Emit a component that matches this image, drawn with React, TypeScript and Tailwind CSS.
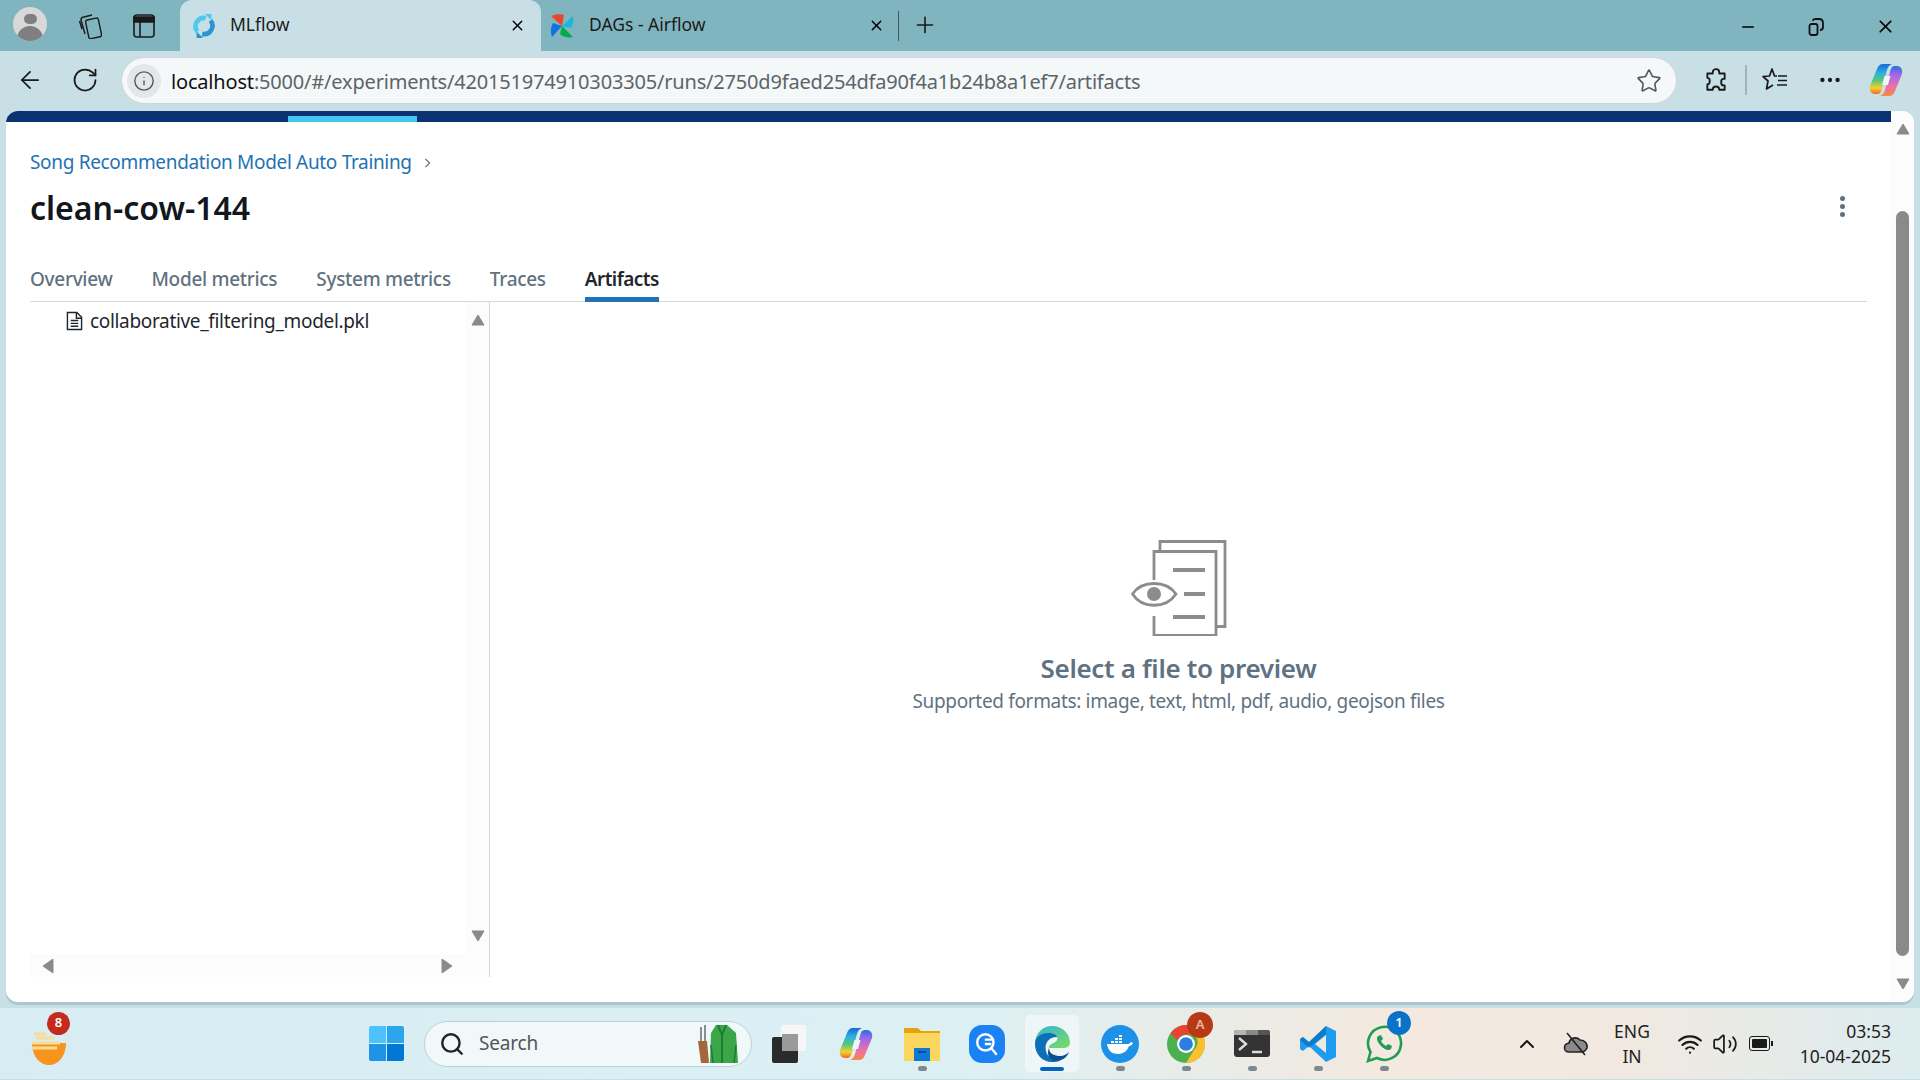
import { ArrowLeft, ChevronUp, Info, Minus, MoreHorizontal, Plus, RotateCw, Search, Star, Volume2, Wifi, X } from "lucide-react"

const font = "font-['Noto_Sans','Open_Sans',sans-serif]"

function Triangle({ dir, className }: { dir: "up" | "down" | "left" | "right"; className?: string }) {
  const points = {
    up: "7,1 13,11 1,11",
    down: "1,1 13,1 7,11",
    left: "11,0 11,14 1,7",
    right: "1,0 1,14 11,7",
  }[dir]
  return (
    <svg viewBox="0 0 14 14" className={className}>
      <polygon points={points} fill="#8a8a8a" stroke="#8a8a8a" strokeWidth="1" strokeLinejoin="round" />
    </svg>
  )
}

function CopilotLogo({ id, className }: { id: string; className?: string }) {
  return (
    <svg viewBox="0 0 36 36" className={className}>
      <defs>
        <linearGradient id={`${id}A`} x1="0" y1="0" x2="0" y2="1">
          <stop offset="0" stopColor="#1668d8" />
          <stop offset="0.3" stopColor="#30b0e0" />
          <stop offset="0.55" stopColor="#56c878" />
          <stop offset="0.8" stopColor="#f6d22b" />
          <stop offset="1" stopColor="#f0662c" />
        </linearGradient>
        <linearGradient id={`${id}B`} x1="0" y1="0" x2="0" y2="1">
          <stop offset="0" stopColor="#2a70e0" />
          <stop offset="0.3" stopColor="#a468e8" />
          <stop offset="0.7" stopColor="#f070a8" />
          <stop offset="1" stopColor="#f58a3c" />
        </linearGradient>
      </defs>
      <path d="M15 2h9c-3 1-4 3-5 6l-5 18c-1 4-2 6-5 6H7C3 32 1 28 2 24L9 7c1-3 3-5 6-5Z" fill={`url(#${id}A)`} />
      <path d="M21 34h-9c3-1 4-3 5-6l5-18c1-4 2-6 5-6h2c4 0 6 4 5 8l-7 17c-1 3-3 5-6 5Z" fill={`url(#${id}B)`} />
      <path d="M16.500 14h6l-2.500 9h-6z" fill="#eef6f8" />
    </svg>
  )
}

function MlflowLogo({ className }: { className?: string }) {
  return (
    <svg viewBox="0 0 28 28" className={className} fill="none" strokeWidth="5">
      <path d="M16 5.500A9 9 0 0 0 7 20" stroke="#4fc8f0" />
      <path d="M12 22.500A9 9 0 0 0 21 8" stroke="#2a94d6" />
      <polygon points="15,1 22,1 22,8" fill="#4fc8f0" />
      <polygon points="13,27 6,27 6,20" fill="#2a94d6" />
    </svg>
  )
}

function AirflowLogo({ className }: { className?: string }) {
  return (
    <svg viewBox="0 0 24 24" className={className}>
      <path d="M12 12 1 2c5-2 10-2 13-1z" fill="#e8472c" />
      <path d="M12 12 23 2c1 4 0 9-2 12z" fill="#1bb8d8" />
      <path d="M12 12 23 23c-5 1-10 0-13-3z" fill="#00ad46" />
      <path d="M12 12 2 23C0 18 1 12 3 9z" fill="#1273e0" />
    </svg>
  )
}

function PreviewIcon() {
  return (
    <svg viewBox="0 0 96 96" className="h-[96px] w-[96px]" fill="none" stroke="#8c8c8c" strokeWidth="2.8">
      <path d="M29 10V1.500h65v85H85" />
      <path d="M23 40V11.500h62v84H23V76" />
      <path d="M42 30h32M53 54h21M42 77h32" strokeWidth="4" />
      <path d="M1.500 54C11 40 35 40 45 54 35 69 11 69 1.500 54Z" />
      <circle cx="23" cy="54" r="7" fill="#8c8c8c" stroke="none" />
    </svg>
  )
}

function FileIcon() {
  return (
    <svg viewBox="0 0 18 20" className="mr-[7px] mt-[3px] h-[20px] w-[17px]" fill="none" stroke="#1f272d" strokeWidth="1.5">
      <path d="M1.500 1h10l5 5v13h-15zM11 1v6h5.500" />
      <path d="M5 9.500h8M5 12.500h8M5 15.500h8" />
    </svg>
  )
}

function TabStrip() {
  return (
    <div className="flex h-[51px] items-end bg-[#80b5bf]">
      <div className="ml-[13px] mb-[10px] flex h-[34px] w-[34px] flex-col items-center overflow-hidden rounded-full bg-[#d8d8d8]">
        <div className="mt-[7px] h-[13px] w-[13px] rounded-full bg-[#7f7f7f]" />
        <div className="mt-[2px] h-[18px] w-[26px] rounded-t-full bg-[#7f7f7f]" />
      </div>
      <svg viewBox="0 0 24 26" className="ml-[31px] mb-[12px] h-[26px] w-[24px]" fill="none" stroke="#1a1a1a" strokeWidth="1.4">
        <rect x="9" y="6" width="13" height="19" rx="2" transform="rotate(-12 15 15)" />
        <path d="M7 21 3 7c0-2 1-3 3-3l8-2M4 16 1.500 8" />
      </svg>
      <svg viewBox="0 0 22 24" className="ml-[31px] mb-[13px] h-[24px] w-[22px]" fill="none" stroke="#1a1a1a" strokeWidth="1.6">
        <rect x="1" y="1" width="20" height="22" rx="3" />
        <path d="M1 3h20v5H1z" fill="#1a1a1a" />
        <path d="M7 8v15" />
      </svg>
      <div className="ml-[25px] flex h-[51px] w-[361px] items-center rounded-t-[12px] bg-[#c8e0e5] pl-[11px]">
        <MlflowLogo className="h-[26px] w-[26px]" />
        <span className={`ml-[13px] -mt-[2px] text-[17.5px] text-[#1a1a1a] ${font}`}>MLflow</span>
        <X className="ml-auto mr-[15px] h-[17px] w-[17px] text-black" strokeWidth={2} />
      </div>
      <div className="flex h-[51px] w-[358px] items-center pl-[9px]">
        <AirflowLogo className="h-[26px] w-[24px]" />
        <span className={`ml-[15px] -mt-[2px] text-[17.5px] text-[#1a1a1a] ${font}`}>DAGs - Airflow</span>
        <X className="ml-auto mr-[13px] h-[17px] w-[17px] text-black" strokeWidth={2} />
        <div className="h-[30px] w-px bg-[#3d5a60]" />
      </div>
      <Plus className="ml-[13px] mb-[13px] h-[26px] w-[26px] text-[#1a1a1a]" strokeWidth={1.5} />
      <div className="ml-auto mb-[14px] flex items-center">
        <Minus className="mr-[51px] h-[18px] w-[18px] text-black" strokeWidth={2} />
        <svg viewBox="0 0 16 18" className="mr-[51px] h-[18px] w-[16px]" fill="none" stroke="#111" strokeWidth="1.8">
          <rect x="1.500" y="6" width="8" height="11" rx="2" />
          <path d="M5 3c0-2 1-2 3-2h3c3 0 4 1 4 4v4c0 2-1 3-3 3" />
        </svg>
        <X className="mr-[24px] h-[21px] w-[21px] text-black" strokeWidth={2} />
      </div>
    </div>
  )
}

function Toolbar() {
  return (
    <div className="flex h-[60px] items-start bg-[#c8e0e5] pt-[6px]">
      <ArrowLeft className="ml-[16px] mt-[9px] h-[28px] w-[28px] text-[#1a1a1a]" strokeWidth={1.5} />
      <RotateCw className="ml-[27px] mt-[9px] h-[28px] w-[28px] text-[#1a1a1a]" strokeWidth={1.5} />
      <div className="ml-[22px] flex h-[47px] w-[1556px] items-center rounded-full border-[1.5px] border-[#cfd4d6] bg-[#f4f8f9] pl-[5px] pr-[14px]">
        <div className="flex h-[34px] w-[34px] items-center justify-center rounded-full bg-[#e3e7e9]">
          <Info className="h-[22px] w-[22px] text-[#555]" strokeWidth={1.5} />
        </div>
        <div className={`ml-[10px] mt-[2px] text-[20px] tracking-[-0.18px] text-[#5d6468] ${font}`}>
          <span className="text-[#111]">localhost</span>:5000/#/experiments/420151974910303305/runs/2750d9faed254dfa90f4a1b24b8a1ef7/artifacts
        </div>
        <Star className="ml-auto h-[26px] w-[26px] text-[#555]" strokeWidth={1.5} />
      </div>
      <svg viewBox="0 0 24 24" className="ml-[26px] mt-[10px] h-[26px] w-[26px]" fill="none" stroke="#1a1a1a" strokeWidth="1.7" strokeLinejoin="round">
        <path d="M9 5c0-4 6-4 6 0v1h5v5h-1c-3 0-3 6 0 6h1v4h-5c0-4-6-4-6 0H4v-5c3 0 3-6 0-6V6h5z" />
      </svg>
      <div className="ml-[16px] mt-[8px] h-[30px] w-[2px] bg-[#a3b3b7]" />
      <svg viewBox="0 0 26 26" className="ml-[15px] mt-[10px] h-[26px] w-[26px]" fill="none" stroke="#1a1a1a" strokeWidth="1.7" strokeLinejoin="round">
        <path d="M15 9h-2.500L10 2 7.500 9 1 9.500 6 14 4.500 22 11 18" />
        <path d="M16 9h9M16 13.500h9M15 18h10" />
      </svg>
      <MoreHorizontal className="ml-[29px] mt-[10px] h-[26px] w-[26px] text-[#1a1a1a]" strokeWidth={2} />
      <CopilotLogo id="cpTop" className="ml-[25px] mt-[5px] h-[36px] w-[36px]" />
    </div>
  )
}

const tabs = ["Overview", "Model metrics", "System metrics", "Traces", "Artifacts"]

function RunPage() {
  return (
    <div className={`mx-[6px] flex h-[891px] overflow-hidden rounded-[12px] bg-white tracking-[-0.33px] shadow-[0_3px_0_#a9c9cf] ${font}`}>
      <div className="flex min-w-0 flex-1 flex-col">
        <div className="h-[11px] bg-[#0b3373] pl-[282px] pt-[5px]">
          <div className="h-[6px] w-[129px] bg-[#45c6ee]" />
        </div>
        <div className="flex flex-1 flex-col pl-[24px] pr-[24px]">
          <div className="mt-[27px] flex h-[26px] items-center text-[19px] leading-[26px] text-[#2272b4]">
            Song Recommendation Model Auto Training
            <svg viewBox="0 0 8 12" className="ml-[12px] mt-[2px] h-[10px] w-[7px]" fill="none" stroke="#5f7281" strokeWidth="1.5">
              <path d="M1.500 1l5 5-5 5" />
            </svg>
          </div>
          <div className="mt-[11px] flex items-center justify-between">
            <h1 className="text-[32px] font-semibold leading-[44px] tracking-normal text-[#11171c]">clean-cow-144</h1>
            <div className="mr-[22px] -mt-[3px] flex flex-col gap-[3px]">
              <div className="h-[5px] w-[5px] rounded-full bg-[#5f7281]" />
              <div className="h-[5px] w-[5px] rounded-full bg-[#5f7281]" />
              <div className="h-[5px] w-[5px] rounded-full bg-[#5f7281]" />
            </div>
          </div>
          <div className="mt-[29px] flex h-[43px] gap-[39px] border-b-[1.5px] border-[#d1d9e1] text-[19px] font-medium tracking-[-0.3px]">
            {tabs.map((tab) => (
              <div
                key={tab}
                className={
                  tab === "Artifacts"
                    ? "h-[43px] border-b-[5px] border-[#2272b4] pt-[7px] font-semibold leading-[26px] tracking-[-0.55px] text-[#1f272d]"
                    : "pt-[7px] leading-[26px] text-[#5f7281]"
                }
              >
                {tab}
              </div>
            ))}
          </div>
          <div className="flex h-[675px]">
            <div className="flex w-[460px] flex-col border-r-[1.5px] border-[#d1d9e1]">
              <div className="flex min-h-0 flex-1">
                <div className="flex flex-1 items-start pl-[36px] pt-[6px] text-[19px] leading-[26px] text-[#1f272d]">
                  <FileIcon />
                  collaborative_filtering_model.pkl
                </div>
                <div className="flex w-[23px] flex-col items-center justify-between bg-[#fcfcfc] pb-[10px] pt-[12px]">
                  <Triangle dir="up" className="h-[14px] w-[14px]" />
                  <Triangle dir="down" className="h-[14px] w-[14px]" />
                </div>
              </div>
              <div className="flex h-[23px] items-center justify-between bg-[#fcfcfc] pl-[12px] pr-[34px]">
                <Triangle dir="left" className="h-[14px] w-[14px]" />
                <Triangle dir="right" className="h-[14px] w-[14px]" />
              </div>
            </div>
            <div className="flex flex-1 flex-col items-center pt-[238px]">
              <PreviewIcon />
              <div className="mt-[14px] text-[26px] font-semibold leading-[36px] text-[#5f7281]">Select a file to preview</div>
              <div className="mt-[2px] text-[19px] leading-[26px] text-[#5f7281]">Supported formats: image, text, html, pdf, audio, geojson files</div>
            </div>
          </div>
        </div>
      </div>
      <div className="flex w-[23px] flex-col items-center bg-[#fcfcfc] pb-[10px] pt-[12px]">
        <Triangle dir="up" className="h-[14px] w-[16px]" />
        <div className="mt-[74px] h-[746px] w-[13px] rounded-full bg-[#8a8a8a]" />
        <Triangle dir="down" className="mt-[22px] h-[14px] w-[16px]" />
      </div>
    </div>
  )
}

function Dot({ active }: { active?: boolean }) {
  return <div className={active ? "h-[4px] w-[24px] rounded-full bg-[#0067c0]" : "h-[5px] w-[9px] rounded-full bg-[#7c8a90]"} />
}

function TaskIcon({ children, dot, active }: { children: React.ReactNode; dot?: boolean; active?: boolean }) {
  return (
    <div className={`relative flex h-[57px] w-[54px] flex-col items-center justify-center rounded-[5px] ${active ? "bg-[#eef6f8] shadow-[5px_0_0_-1px_#e4eff1]" : ""}`}>
      <div className="flex h-[38px] w-[38px] items-center justify-center">{children}</div>
      <div className="absolute bottom-[1px] flex justify-center">{(dot || active) && <Dot active={active} />}</div>
    </div>
  )
}

function Badge({ children, color, className }: { children: React.ReactNode; color: string; className: string }) {
  return (
    <div className={`absolute flex items-center justify-center rounded-full text-[13px] font-semibold ${color} ${className}`}>{children}</div>
  )
}

function Taskbar() {
  return (
    <div className={`mt-[6px] flex h-[71px] items-center bg-[linear-gradient(90deg,#d7edf3_0%,#dcf0f4_50%,#f3e9df_72%,#f1e9e1_85%,#dcecef_100%)] ${font}`}>
      <div className="relative ml-[30px] h-[42px] w-[36px]">
        <svg viewBox="0 0 36 42" className="h-[42px] w-[36px]">
          <path d="M2 20h34c0 12-7 22-17 22S2 32 2 20Z" fill="#f7941d" />
          <path d="M4 11h12M6 15h18M2 20h28M1 25h26" stroke="#f8dc9a" strokeWidth="3" />
        </svg>
        <Badge color="bg-[#c42b1c] text-white" className="left-[17px] top-[-11px] h-[23px] w-[23px]">8</Badge>
      </div>
      <div className="ml-[303px] grid h-[35px] w-[35px] grid-cols-2 gap-[1.5px]">
        <div className="rounded-tl-[2px] bg-[#4cc2ff]" />
        <div className="rounded-tr-[2px] bg-[#2aa5ee]" />
        <div className="rounded-bl-[2px] bg-[#1f94e6]" />
        <div className="rounded-br-[2px] bg-[#0078d4]" />
      </div>
      <div className="ml-[20px] flex h-[46px] w-[328px] items-center rounded-full border-[1.5px] border-[#bcd2d8] bg-[#f0f8fa] pl-[14px] pr-[12px]">
        <Search className="h-[26px] w-[26px] text-[#222]" strokeWidth={2.2} />
        <span className="ml-[14px] text-[19px] tracking-[-0.2px] text-[#555]">Search</span>
        <svg viewBox="0 0 42 42" className="ml-auto h-[42px] w-[42px]">
          <path d="M1 18h9l2 22H4z" fill="#a4673b" />
          <path d="M4 4v14M8 2v16" stroke="#8a8f92" strokeWidth="2" />
          <path d="M19 2h11l9 8 2 30H13l1-30z" fill="#3aa648" />
          <path d="M21 2l4 10 4-10M25 12v28" stroke="#1e7b33" strokeWidth="2" fill="none" />
          <path d="M14 22l2 18M39 22l-2 18" stroke="#1e7b33" strokeWidth="1.5" />
        </svg>
      </div>
      <div className="relative ml-[19px] h-[38px] w-[36px]">
        <div className="absolute right-[1px] top-0 h-[26px] w-[25px] rounded-[2px] bg-[#f6f6f6]" />
        <div className="absolute bottom-0 left-[1px] h-[26px] w-[26px] rounded-[2px] bg-[#2a2a2a]" />
        <div className="absolute left-[11px] top-[9px] h-[17px] w-[16px] bg-[#9a9a9a]" />
      </div>
      <CopilotLogo id="cpBar" className="ml-[31px] h-[38px] w-[36px]" />
      <div className="relative ml-[21px] flex h-[57px] w-[54px] flex-col items-center justify-center">
        <svg viewBox="0 0 38 36" className="h-[36px] w-[38px]">
          <path d="M1 2h14l3 3h19v30H1z" fill="#e5a50a" />
          <path d="M1 7h36v28H1z" fill="#fbd760" />
          <path d="M11 22h16v13H11z" fill="#0f78d4" />
          <path d="M15 26h8" stroke="#0a4f8f" strokeWidth="2" />
        </svg>
        <div className="absolute bottom-[1px]"><Dot /></div>
      </div>
      <div className="ml-[11px] flex items-center">
        <TaskIcon>
          <div className="flex h-[38px] w-[36px] items-center justify-center rounded-[13px] bg-[#1a82f5]">
            <svg viewBox="0 0 24 24" className="h-[26px] w-[26px]" fill="none" stroke="#fff" strokeWidth="2.2">
              <circle cx="10.500" cy="10.500" r="7.500" />
              <path d="M16 16l5 6M10 8h8M10 12h6" />
            </svg>
          </div>
        </TaskIcon>
        <div className="ml-[11px]">
          <TaskIcon active>
            <svg viewBox="0 0 38 38" className="h-[38px] w-[38px]">
              <defs>
                <linearGradient id="edgeA" x1="0" y1="0" x2="1" y2="1">
                  <stop offset="0" stopColor="#2fb4d8" />
                  <stop offset="1" stopColor="#7fdc5f" />
                </linearGradient>
              </defs>
              <path d="M2 19C2 8 10 1 19 1c11 0 18 8 18 17 0 3-3 5-7 5H16c0-6 10-4 8-11C21 7 6 7 2 19Z" fill="url(#edgeA)" />
              <path d="M2 19c0-7 6-11 13-11 5 0 9 2 9 4-8 0-13 6-11 14 1 6 8 10 15 9-3 2-6 2-9 2C9 37 2 29 2 19Z" fill="#0c6fb8" />
              <path d="M16 23c0 6 6 8 11 8 4 0 7-2 9-4-3 8-11 10-16 8-5-2-6-7-4-12Z" fill="#0a4f8f" />
            </svg>
          </TaskIcon>
        </div>
        <div className="ml-[14px] flex items-center gap-[12px]">
          <TaskIcon dot>
            <div className="flex h-[38px] w-[38px] items-center justify-center rounded-full bg-[#1d91e8]">
              <svg viewBox="0 0 28 20" className="h-[20px] w-[28px]" fill="#fff">
                <path d="M1 10h22c1-2 3-2 4-1-1 2-2 3-4 3-2 6-7 8-11 8-7 0-10-4-11-10Z" />
                <path d="M5 7h3v2H5zM9 7h3v2H9zM13 7h3v2h-3zM9 4h3v2H9zM13 4h3v2h-3zM13 1h3v2h-3z" />
              </svg>
            </div>
          </TaskIcon>
          <TaskIcon dot>
            <svg viewBox="0 0 36 36" className="h-[38px] w-[38px]">
              <circle cx="18" cy="18" r="18" fill="#4caf50" />
              <path d="M18 0a18 18 0 0 1 15.600 9H18a9 9 0 0 0-8.300 5.500L3.400 8A18 18 0 0 1 18 0Z" fill="#ea4335" />
              <path d="M33.600 9A18 18 0 0 1 18 36l8-13a9 9 0 0 0-1-14Z" fill="#fbc02d" />
              <circle cx="18" cy="18" r="8.500" fill="#fff" />
              <circle cx="18" cy="18" r="6.500" fill="#2a7de1" />
            </svg>
            <Badge color="bg-[#b83a14] text-[#f0b8a0]" className="left-[28px] top-[-3px] h-[26px] w-[26px]">A</Badge>
          </TaskIcon>
          <TaskIcon dot>
            <div className="flex h-[27px] w-[36px] flex-col overflow-hidden rounded-[3px] bg-[#333]">
              <div className="flex h-[5px]">
                <div className="w-[12px] bg-[#b5b5b5]" />
                <div className="w-[12px] bg-[#8a8a8a]" />
                <div className="flex-1 bg-[#555]" />
              </div>
              <svg viewBox="0 0 36 22" className="h-[22px] w-[36px]" fill="none" stroke="#ddd" strokeWidth="2.4">
                <path d="M5 3l7 6-7 6M18 17h10" />
              </svg>
            </div>
          </TaskIcon>
          <TaskIcon dot>
            <svg viewBox="0 0 36 38" className="h-[38px] w-[36px]">
              <path d="M26 1 36 6v26l-10 5L9 21 3 26l-3-2V14l3-2 6 5Z" fill="#1f9cf0" />
              <path d="M26 1 9 17l-6-5-3 2v1l9 8 17-14Z" fill="#0065a9" opacity=".55" />
              <path d="M26 10v18l-11-9Z" fill="#f0e9e2" />
            </svg>
          </TaskIcon>
          <TaskIcon dot>
            <svg viewBox="0 0 38 38" className="h-[38px] w-[38px]" fill="none">
              <path d="M3 36 5.500 27A16.500 16.500 0 1 1 12 33Z" stroke="#1f9d55" strokeWidth="2.6" />
              <path d="M13 11c-2 2-1 6 3 10s8 5 10 3l1-3-4-2-2 2c-2-1-4-3-5-5l2-2-2-4Z" fill="#1f9d55" />
            </svg>
            <Badge color="bg-[#0b72c9] text-white" className="left-[30px] top-[-4px] h-[24px] w-[24px]">1</Badge>
          </TaskIcon>
        </div>
      </div>
      <ChevronUp className="ml-[104px] h-[24px] w-[24px] text-[#1a1a1a]" strokeWidth={2} />
      <svg viewBox="0 0 26 24" className="ml-[24px] h-[24px] w-[26px]" fill="#8a8a8a" stroke="#222" strokeWidth="1.6">
        <path d="M6 20c-6 0-6-8 0-9 1-5 8-7 11-3 5 0 8 4 7 8-1 2-2 4-5 4Z" />
        <path d="M4 1l18 22" />
      </svg>
      <div className="ml-[22px] w-[42px] text-center text-[17.500px] leading-[25px] text-[#222]">
        ENG
        <br />
        IN
      </div>
      <Wifi className="ml-[24px] h-[26px] w-[26px] text-[#1a1a1a]" strokeWidth={2} />
      <Volume2 className="ml-[9px] h-[26px] w-[26px] text-[#1a1a1a]" strokeWidth={1.6} />
      <div className="relative ml-[11px] flex h-[15px] w-[21px] items-center rounded-[3px] border-[1.5px] border-[#1a1a1a] p-[2px]">
        <div className="h-full w-full rounded-[1px] bg-[#1a1a1a]" />
        <div className="absolute right-[-4px] h-[5px] w-[2px] bg-[#1a1a1a]" />
      </div>
      <div className="ml-auto mr-[29px] text-right text-[17.500px] leading-[25px] text-[#222]">
        03:53
        <br />
        10-04-2025
      </div>
    </div>
  )
}

export default function App() {
  return (
    <div className="h-[1080px] w-[1920px] overflow-hidden bg-[#c8e0e5]">
      <TabStrip />
      <Toolbar />
      <RunPage />
      <Taskbar />
    </div>
  )
}
